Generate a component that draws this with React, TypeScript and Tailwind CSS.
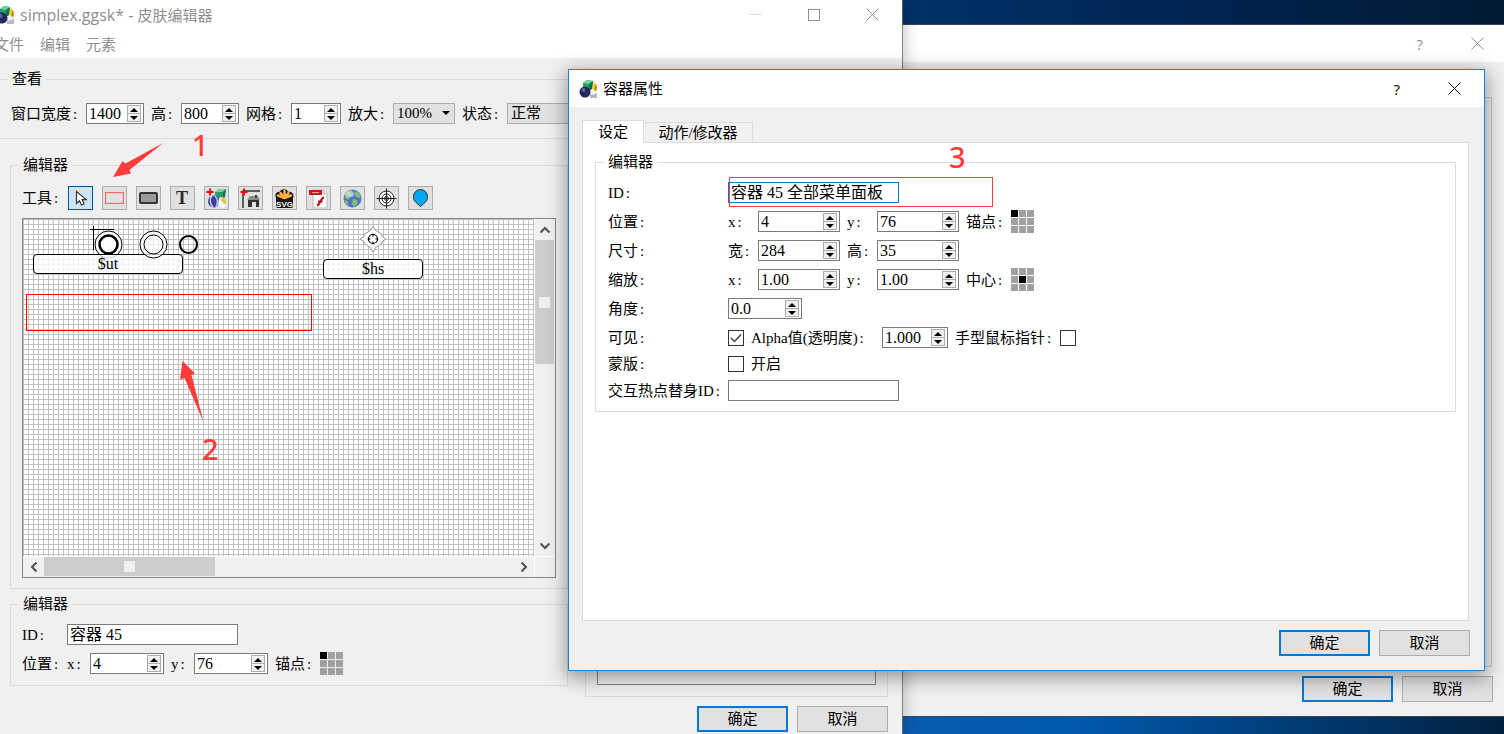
import { ReactNode, useId } from "react";

function AppIcon() {
  return (
    <svg width="19" height="20" viewBox="0 0 19 20" className="shrink-0">
      <path d="M4 4l4-3 6 1-1 8-4 2-5-2z" fill="#2a9d6b" />
      <path d="M4 4l4-3 6 1-4 3z" fill="#6fd3a0" />
      <path d="M10 5l4-3-1 8-3 2z" fill="#14704a" />
      <path d="M15 2l3 7-1 3-4-2z" fill="#f2cf1d" />
      <path d="M17 4l1 5-1 3-2-1z" fill="#c08a0a" />
      <path d="M10 13l7-1 1 2v5h-7z" fill="#b9bcbf" />
      <path d="M10 13l7-1 1 2-6 2z" fill="#f1f2f3" />
      <circle cx="6" cy="13" r="5.5" fill="#25265c" />
      <circle cx="4.5" cy="11" r="2" fill="#5f6499" />
    </svg>
  );
}

function CloseIcon() {
  return (
    <svg width="13" height="13" viewBox="0 0 13 13" stroke="currentColor">
      <path d="M.5 .5l12 12M12.5 .5l-12 12" />
    </svg>
  );
}

function Label({ children, htmlFor, className = "" }: { children: ReactNode; htmlFor?: string; className?: string }) {
  return (
    <label htmlFor={htmlFor} className={`shrink-0 whitespace-nowrap ${className}`}>
      {children}
      <span className="inline-block w-2 text-center">:</span>
    </label>
  );
}

function Stepper() {
  return (
    <span className="flex w-[14px] shrink-0 flex-col text-black">
      <button type="button" aria-label="+" className="flex h-[9px] items-center justify-center border border-[#adadad] bg-[#f0f0f0]">
        <svg width="8" height="4" viewBox="0 0 8 4" fill="currentColor"><path d="M0 4L4 0l4 4z" /></svg>
      </button>
      <button type="button" aria-label="-" className="-mt-px flex h-[9px] items-center justify-center border border-[#adadad] bg-[#f0f0f0]">
        <svg width="8" height="4" viewBox="0 0 8 4" fill="currentColor"><path d="M0 0l4 4 4-4z" /></svg>
      </button>
    </span>
  );
}

type SpinProps = { label: string; value: string; width: string; labelClass?: string };

function SpinField({ label, value, width, labelClass }: SpinProps) {
  const id = useId();
  return (
    <>
      <Label htmlFor={id} className={labelClass}>{label}</Label>
      <SpinBox id={id} value={value} width={width} />
    </>
  );
}

function SpinBox({ id, value, width }: { id: string; value: string; width: string }) {
  return (
    <span className={`flex h-[21px] shrink-0 items-center border border-[#7a7a7a] bg-white pr-[2px] ${width}`}>
      <input id={id} defaultValue={value} className="h-full min-w-0 flex-1 pl-[2px] text-base outline-none" />
      <Stepper />
    </span>
  );
}

function SelectField({ label, value, width }: { label: string; value: string; width: string }) {
  const id = useId();
  return (
    <>
      <Label htmlFor={id}>{label}</Label>
      <span className={`relative shrink-0 ${width}`}>
        <select id={id} className="block h-[21px] w-full appearance-none border border-[#adadad] bg-[#e1e1e1] pl-[3px] leading-[19px]">
          <option>{value}</option>
        </select>
        <svg width="8" height="4" viewBox="0 0 8 4" className="pointer-events-none absolute top-2 right-[5px]">
          <path d="M0 0h8L4 4z" />
        </svg>
      </span>
    </>
  );
}

function AnchorGrid({ active }: { active: number }) {
  return (
    <span className="grid shrink-0 grid-cols-3 gap-px">
      {Array.from({ length: 9 }, (_, i) => (
        <button key={i} type="button" aria-label={String(i + 1)} className={`size-[7px] ${i === active ? "bg-black" : "bg-[#a0a0a0]"}`} />
      ))}
    </span>
  );
}

function CheckBox({ id, checked = false }: { id: string; checked?: boolean }) {
  return (
    <span className="relative size-4 shrink-0">
      <input id={id} type="checkbox" defaultChecked={checked} className="peer block size-4 appearance-none border border-[#333] bg-white" />
      <svg viewBox="0 0 16 16" fill="none" stroke="#444" strokeWidth="1.5" className="pointer-events-none absolute inset-0 hidden peer-checked:block">
        <path d="M3 8l3.5 3.5L13 4.5" />
      </svg>
    </span>
  );
}

function Group({ title, className = "", children }: { title: string; className?: string; children: ReactNode }) {
  return (
    <fieldset className={`min-w-0 border border-[#dcdcdc] ${className}`}>
      <legend className="h-5 px-1">{title}</legend>
      {children}
    </fieldset>
  );
}

function DialogButtons({ className = "" }: { className?: string }) {
  return (
    <div className={`flex shrink-0 justify-end gap-[9px] ${className}`}>
      <button type="button" className="h-[26px] w-[91px] border-2 border-[#0078d7] bg-[#e1e1e1]">确定</button>
      <button type="button" className="h-[26px] w-[91px] border border-[#adadad] bg-[#e1e1e1]">取消</button>
    </div>
  );
}

const tools: { name: string; icon: ReactNode }[] = [
  {
    name: "选择",
    icon: <path d="M7.5 4.5v12l3-2.7 2 4.2 2.6-1.2-2-4.2h4z" fill="#fff" stroke="#333" strokeWidth="1.2" />,
  },
  {
    name: "容器",
    icon: (
      <g fill="none">
        <rect x="2.5" y="5.5" width="18" height="11" stroke="#f5676a" />
        <rect x="3.5" y="6.5" width="16" height="9" stroke="#f7c9c9" />
      </g>
    ),
  },
  {
    name: "矩形",
    icon: <rect x="3" y="6" width="17" height="10" rx="1" fill="#999" stroke="#333" strokeWidth="2" />,
  },
  {
    name: "文本",
    icon: <text x="11" y="17" textAnchor="middle" fontSize="18" fontWeight="bold" fill="#2b2b2b">T</text>,
  },
  {
    name: "图片",
    icon: (
      <>
        <path d="M10 5l4-3h7l-2 8-9 1z" fill="#2a9d6b" />
        <path d="M10 5l4-3h7l-3 3z" fill="#79d0a8" />
        <path d="M18 5l3-3-1 8-2 2z" fill="#14704a" />
        <path d="M19 10l2 5-2 3-4-4z" fill="#eac21c" />
        <circle cx="9" cy="14.5" r="6" fill="#37419b" />
        <path d="M7 9c-3 3-2 8 1 11M10 9c3 3 3 7 1 11" stroke="#c9cdf4" strokeWidth="1.5" fill="none" />
        <path d="M14 11l7 8-3 2-5-2z" fill="#fff" />
        <path d="M5 1.500v7M1.500 5h7" stroke="#f00" strokeWidth="1.8" />
      </>
    ),
  },
  {
    name: "按钮",
    icon: (
      <>
        <path d="M4 21V4h17" stroke="#333" strokeWidth="1.5" fill="none" />
        <path d="M8 13l3-4h8l2 4z" fill="#8a8a8a" />
        <path d="M9 13h11v7h-3v-5h-4v5H9z" fill="#333" />
        <path d="M16 8h2v3h-2z" fill="#444" />
        <path d="M5 1.500v7M1.500 5h7" stroke="#f00" strokeWidth="1.8" />
      </>
    ),
  },
  {
    name: "SVG",
    icon: (
      <>
        <path d="M3 11C1 6 5 4 7 5c0-3 7-4 8 0 3-1 7 2 5 6v8q0 2-2 2H5q-2 0-2-2z" fill="#151515" />
        <path
          d="M11.5 11V4M11.5 11l-4-5M11.5 11l4-5M11.5 11L5 8.500M11.5 11L18 8.500"
          stroke="#ffb13b"
          strokeWidth="2.5"
          strokeLinecap="round"
        />
        <text x="11.5" y="19.5" textAnchor="middle" fontSize="8" fontWeight="bold" fill="#fff" className="font-['Liberation_Sans',sans-serif]">SVG</text>
      </>
    ),
  },
  {
    name: "Flash",
    icon: (
      <>
        <path d="M6 3h10l4 4v14H6z" fill="#fafafa" stroke="#bbb" />
        <path d="M16 3v4h4" fill="#e4e4e4" stroke="#bbb" />
        <rect x="2" y="3" width="13" height="5" fill="#c9181e" />
        <path d="M5 5.5h7" stroke="#f3a3a5" />
        <path d="M17 10.500c-4 .5-3 7-7 8M11 14.500h4.500" stroke="#b3141a" strokeWidth="2" fill="none" />
      </>
    ),
  },
  {
    name: "外部",
    icon: (
      <>
        <circle cx="11.5" cy="11.5" r="9" fill="#5573c4" />
        <path
          d="M3.500 8c2-4 6-5.500 8-4.500l-2 3 2 1-4 5-3-1zM14 4c3 1 5 3 6 6l-3 1-3-3zM12 12l4 1 1 3-4 4-2-3zM3.500 13l3 1 1 5c-2-1-4-3-4-6z"
          fill="#82c26f"
        />
        <ellipse cx="9" cy="7" rx="4.5" ry="3" fill="#e8f0fd" opacity=".55" />
      </>
    ),
  },
  {
    name: "热点",
    icon: (
      <g fill="none" stroke="#222">
        <circle cx="11.5" cy="11.5" r="7.500" fill="#fff" />
        <circle cx="11.5" cy="11.5" r="4.500" />
        <circle cx="11.5" cy="11.5" r="2" />
        <path d="M11.5 1.500v20M1.500 11.500h20" />
      </g>
    ),
  },
  {
    name: "标记",
    icon: <path d="M11.5 19.500L7 15.500C4.500 13.500 4.500 11 4.500 9.500a7 7 0 0 1 14 0c0 1.500 0 4-2.500 6z" fill="#00a9f4" stroke="#333" />,
  },
];

function ToolBar() {
  return (
    <div className="mb-2 flex items-center gap-2">
      <Label>工具</Label>
      <div className="flex gap-[9px]">
        {tools.map((tool, i) => (
          <button
            key={tool.name}
            type="button"
            aria-label={tool.name}
            className={`h-6 w-[25px] border ${i === 0 ? "border-[#005499] bg-[#cce4f7]" : "border-[#adadad] bg-[#e1e1e1]"}`}
          >
            <svg width="23" height="22" viewBox="0 0 23 22">{tool.icon}</svg>
          </button>
        ))}
      </div>
    </div>
  );
}

function Chevron({ className = "" }: { className?: string }) {
  return (
    <svg width="12" height="12" viewBox="0 0 12 12" fill="none" stroke="#505050" strokeWidth="2" className={`shrink-0 ${className}`}>
      <path d="M1.500 8.500L6 4l4.500 4.500" />
    </svg>
  );
}

function SkinCanvas() {
  return (
    <div className="grid h-[360px] grid-cols-[1fr_20px] grid-rows-[1fr_20px] gap-px border border-[#828790] bg-white">
      <div className="relative overflow-hidden bg-[linear-gradient(to_right,#c0c0c0_1px,transparent_1px),linear-gradient(to_bottom,#c0c0c0_1px,transparent_1px)] bg-size-[5px_5px]">
        <svg width="200" height="60" className="absolute top-0 left-0" fill="none" stroke="#000">
          <path d="M70.500 7v24M67 10.500h24" />
          <circle cx="85.500" cy="25.500" r="13.500" fill="#fff" fillOpacity=".8" />
          <circle cx="85.500" cy="25.500" r="9" fill="#fff" fillOpacity=".5" strokeWidth="2.500" />
        </svg>
        <div className="absolute top-[35px] left-[10px] h-[20px] w-[150px] rounded border border-black bg-white/80 text-center text-base leading-[18px]">$ut</div>
        <svg width="200" height="60" className="absolute top-0 left-0" fill="none" stroke="#000">
          <circle cx="130.500" cy="25.500" r="13.500" fill="#fff" fillOpacity=".7" />
          <circle cx="130.500" cy="25.500" r="9.500" />
          <circle cx="165.500" cy="25.500" r="8.500" strokeWidth="2" />
        </svg>
        <svg width="28" height="28" viewBox="-14 -14 28 28" className="absolute top-[6px] left-[336px]">
          <path
            d="M0-13L2.500-8.500 8.500-5 9-2.500 13 0 9 2.500 8.500 5 2.500 8.500 0 13-2.500 8.500-8.500 5-9 2.500-13 0-9-2.500-8.500-5-2.500-8.500z"
            fill="#fff"
            stroke="#999"
            strokeLinejoin="round"
          />
          <circle r="4.500" fill="#fff" stroke="#000" strokeWidth="1.2" />
          <path d="M0-5.500v3M0 5.500v-3M-5.500 0h3M5.500 0h-3" stroke="#000" />
        </svg>
        <div className="absolute top-[40px] left-[300px] h-[20px] w-[100px] rounded border border-black bg-white/80 text-center text-base leading-[18px]">$hs</div>
        <div className="absolute top-[75px] left-[3px] h-[37px] w-[286px] border border-[#f00]" />
      </div>
      <div className="flex flex-col bg-[#f0f0f0] pr-px">
        <span className="flex h-[21px] items-center justify-center"><Chevron /></span>
        <span className="flex h-[124px] items-center justify-center bg-[#cdcdcd]">
          <span className="size-[11px] bg-[#f0f0f0]" />
        </span>
        <span className="mt-auto flex h-[21px] items-center justify-center"><Chevron className="rotate-180" /></span>
      </div>
      <div className="flex items-center bg-[#f0f0f0] pb-px">
        <span className="flex w-[21px] justify-center"><Chevron className="-rotate-90" /></span>
        <span className="flex h-full w-[171px] items-center justify-center bg-[#cdcdcd]">
          <span className="size-[11px] bg-[#f0f0f0]" />
        </span>
        <span className="ml-auto flex w-[21px] justify-center"><Chevron className="rotate-90" /></span>
      </div>
      <div className="bg-[#f0f0f0]" />
    </div>
  );
}

function EditorWindow() {
  return (
    <section className="absolute inset-y-0 right-[602px] left-[-11px] flex flex-col bg-[#f0f0f0] shadow-[0_0_0_1px_rgba(110,110,110,0.8),0_4px_16px_rgba(0,0,0,0.3)]">
      <header className="flex h-[29px] shrink-0 items-center bg-white pr-[23px] pl-[7px] font-['Open_Sans','Noto_Sans_CJK_SC',sans-serif] text-[#8f8f8f]">
        <AppIcon />
        <h1 className="ml-[5px] flex-1">
          <span className="text-base leading-5">simplex.ggsk* - </span>皮肤编辑器
        </h1>
        <div className="flex items-center gap-[46px]">
          <button type="button" aria-label="最小化" className="h-px w-[13px] bg-[#ddd]" />
          <button type="button" aria-label="最大化" className="size-[12px] border border-[#8f8f8f]" />
          <button type="button" aria-label="关闭"><CloseIcon /></button>
        </div>
      </header>
      <nav className="flex h-[29px] shrink-0 items-center gap-4 bg-white pt-[2px] pl-[5px] text-[#8f8f8f]">
        <button type="button">文件</button>
        <button type="button">编辑</button>
        <button type="button">元素</button>
      </nav>
      <div className="pt-[11px] pr-[14px] pl-[10px]">
        <Group title="查看" className="pb-[14px] pl-[8px]">
          <div className="flex items-center gap-[7px] overflow-hidden pt-[14px] pl-[3px]">
            <SpinField label="窗口宽度" value="1400" width="w-[58px]" />
            <SpinField label="高" value="800" width="w-[58px]" />
            <SpinField label="网格" value="1" width="w-[50px]" />
            <SelectField label="放大" value="100%" width="w-[62px]" />
            <SelectField label="状态" value="正常" width="w-[90px]" />
          </div>
        </Group>
        <div className="mt-4 flex gap-[17px] pl-[11px]">
          <div className="min-w-0 flex-1 pb-[11px]">
            <Group title="编辑器" className="px-[8px] pb-[10px]">
              <div className="px-[3px] pt-[11px]">
                <ToolBar />
                <SkinCanvas />
              </div>
            </Group>
            <Group title="编辑器" className="mt-[5px] px-[8px] pb-[11px]">
              <div className="flex flex-col gap-2 pt-[10px] pl-[3px]">
                <div className="flex items-center gap-[7px]">
                  <Label htmlFor="element-id" className="w-[38px]">ID</Label>
                  <input id="element-id" defaultValue="容器 45" className="h-[21px] w-[171px] border border-[#7a7a7a] bg-white px-[2px] text-base outline-none" />
                </div>
                <div className="flex h-[21px] items-center gap-[7px]">
                  <span className="w-[38px] shrink-0 whitespace-nowrap">位置<span className="inline-block w-2 text-center">:</span></span>
                  <SpinField label="x" value="4" width="w-[74px]" labelClass="w-4" />
                  <SpinField label="y" value="76" width="w-[74px]" labelClass="w-4" />
                  <Label>锚点</Label>
                  <AnchorGrid active={0} />
                </div>
              </div>
            </Group>
          </div>
          <div className="flex w-[303px] shrink-0 border border-[#dcdcdc] p-[11px] pt-5">
            <div className="flex-1 border border-[#828790]" />
          </div>
        </div>
        <DialogButtons className="mt-[9px]" />
      </div>
    </section>
  );
}

function BackDialog() {
  return (
    <section className="absolute top-[25px] right-0 bottom-[18px] left-1/2 flex flex-col bg-[#f0f0f0] shadow-[0_0_0_1px_rgba(60,70,85,0.9)]">
      <header className="flex h-[37px] shrink-0 items-center justify-end gap-12 bg-white pr-5 text-[#8f8f8f]">
        <button type="button" className="font-['Open_Sans',sans-serif]">?</button>
        <button type="button" aria-label="关闭"><CloseIcon /></button>
      </header>
      <div className="flex flex-1 flex-col px-[11px] pt-[35px] pb-[14px]">
        <div className="mr-px flex-1 border border-[#c8c8c8]" />
        <DialogButtons className="mt-[9px]" />
      </div>
    </section>
  );
}

function FormRow({ label, htmlFor, className = "h-[21px]", children }: { label: string; htmlFor?: string; className?: string; children: ReactNode }) {
  return (
    <div className={`flex items-center ${className}`}>
      <Label htmlFor={htmlFor} className="w-[120px]">{label}</Label>
      <div className="relative flex items-center gap-[7px]">{children}</div>
    </div>
  );
}

function PropertiesDialog() {
  return (
    <section className="absolute top-[69px] right-[19px] bottom-[63px] left-[568px] flex flex-col border border-[#1883d7] bg-[#f0f0f0] shadow-[0_5px_18px_2px_rgba(0,0,0,0.38)]">
      <header className="flex h-[37px] shrink-0 items-center bg-white pr-[23px] pl-[10px]">
        <AppIcon />
        <h2 className="ml-[5px] flex-1">容器属性</h2>
        <button type="button" className="mr-12 font-['Open_Sans',sans-serif]">?</button>
        <button type="button" aria-label="关闭"><CloseIcon /></button>
      </header>
      <div className="flex flex-1 flex-col pt-[13px] pr-[14px] pb-[14px] pl-[13px]">
        <div className="z-10 -mb-px flex items-end">
          <button type="button" className="h-[23px] w-[62px] border border-b-0 border-[#dcdcdc] bg-white">设定</button>
          <button type="button" className="-ml-px h-[21px] w-[110px] border border-[#dcdcdc]">动作/修改器</button>
        </div>
        <div className="mr-px flex-1 border border-[#dcdcdc] bg-white px-[12px] pt-[9px]">
          <Group title="编辑器" className="px-[8px] pb-[10px]">
            <div className="flex flex-col gap-2 pt-[10px] pl-1">
              <FormRow label="ID" htmlFor="container-id">
                <input id="container-id" defaultValue="容器 45 全部菜单面板" className="h-[21px] w-[171px] border border-[#0078d7] bg-white px-[2px] text-base outline-none" />
                <span className="pointer-events-none absolute -top-[5px] left-px h-[30px] w-[264px] border border-[#ff3b3b]" />
              </FormRow>
              <FormRow label="位置">
                <SpinField label="x" value="4" width="w-[82px]" labelClass="w-[23px]" />
                <SpinField label="y" value="76" width="w-[82px]" labelClass="w-[23px]" />
                <Label>锚点</Label>
                <AnchorGrid active={0} />
              </FormRow>
              <FormRow label="尺寸">
                <SpinField label="宽" value="284" width="w-[82px]" />
                <SpinField label="高" value="35" width="w-[82px]" />
              </FormRow>
              <FormRow label="缩放">
                <SpinField label="x" value="1.00" width="w-[82px]" labelClass="w-[23px]" />
                <SpinField label="y" value="1.00" width="w-[82px]" labelClass="w-[23px]" />
                <Label>中心</Label>
                <AnchorGrid active={4} />
              </FormRow>
              <FormRow label="角度" htmlFor="angle">
                <SpinBox id="angle" value="0.0" width="w-[74px]" />
              </FormRow>
              <FormRow label="可见" htmlFor="visible">
                <CheckBox id="visible" checked />
                <SpinField label="Alpha值(透明度)" value="1.000" width="w-[66px]" labelClass="w-[124px]" />
                <Label htmlFor="hand-cursor">手型鼠标指针</Label>
                <CheckBox id="hand-cursor" />
              </FormRow>
              <FormRow label="蒙版" className="h-4">
                <CheckBox id="mask" />
                <label htmlFor="mask">开启</label>
              </FormRow>
              <FormRow label="交互热点替身ID" htmlFor="proxy-id">
                <input id="proxy-id" className="h-[21px] w-[171px] border border-[#7a7a7a] bg-white px-[2px] text-base outline-none" />
              </FormRow>
            </div>
          </Group>
        </div>
        <DialogButtons className="mt-[9px]" />
      </div>
    </section>
  );
}

function Annotations() {
  return (
    <div className="pointer-events-none absolute inset-0 font-['Noto_Sans',sans-serif] text-[29px] leading-[30px] font-medium text-[#ff3b3b]">
      <svg width="220" height="440" className="absolute top-0 left-0" fill="currentColor">
        <path d="M113 177l9.500-16 3 2.500L163 143l-33.500 27 1.500 3.500z" />
        <path d="M182.500 361l12.500 12.500-3.500 1.500 12 47-19-44-4.500 1.500z" />
      </svg>
      <span className="absolute top-[130px] left-[192px]">1</span>
      <span className="absolute top-[434px] left-[202px]">2</span>
      <span className="absolute top-[142px] left-[949px]">3</span>
    </div>
  );
}

export default function App() {
  return (
    <main className="relative h-screen overflow-hidden bg-[linear-gradient(to_right,#0a5cb0_60%,#0058ad_72%,#004484_82%,#01203f)] font-['Liberation_Serif','Noto_Sans_CJK_SC',serif] text-[15px] leading-5 text-black">
      <div className="h-[25px] bg-[linear-gradient(to_right,#003268_60%,#002450_80%,#001a33)]" />
      <BackDialog />
      <EditorWindow />
      <PropertiesDialog />
      <Annotations />
    </main>
  );
}
